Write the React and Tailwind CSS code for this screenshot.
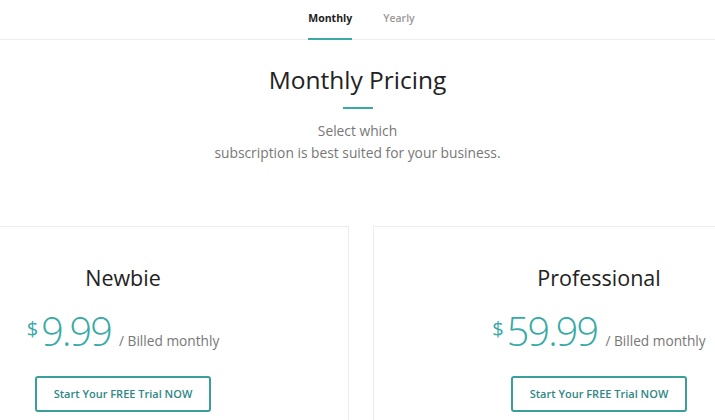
import React from 'react';

const plans = [
  { name: 'Newbie', price: '9.99' },
  { name: 'Professional', price: '59.99' },
];

const PlanCard = ({ plan }) => (
  <div className="w-[452px] shrink-0 h-[240px] border border-[#ececec] bg-white flex flex-col items-center pt-[36px]">
    <h3 className="text-[21.5px] leading-[30px] text-[#222]">{plan.name}</h3>
    <div className="mt-[16px] flex items-baseline text-[#36aaa5]">
      <span className="relative -top-[10px] text-[20px] leading-none mr-[3px]">$</span>
      <span className="text-[39.5px] leading-[44px] font-light tracking-[-1.8px]">{plan.price}</span>
      <span className="text-[13.7px] text-[#777] ml-[8px]">/ Billed monthly</span>
    </div>
    <button className="mt-[23px] w-[176px] h-[36px] border-2 border-[#3a9e9b] rounded-[3px] text-[11px] font-semibold text-[#2e8784]">
      Start Your FREE Trial NOW
    </button>
  </div>
);

export default function App() {
  return (
    <div className="w-[715px] h-[420px] overflow-hidden bg-white font-['Open_Sans',sans-serif]">
      {/* tabs */}
      <div className="border-b border-[#eeeeee] flex justify-center gap-[31px] pl-[8px]">
        <div className="relative pt-[11px] pb-[12px] text-[10.5px] font-bold text-[#222]">
          Monthly
          <div className="absolute left-0 right-0 bottom-[-1px] h-[2px] bg-[#3aa9a4]" />
        </div>
        <div className="pt-[11px] pb-[12px] text-[10.5px] font-semibold text-[#999]">Yearly</div>
      </div>

      {/* heading */}
      <div className="flex flex-col items-center pt-[23px]">
        <h1 className="text-[24.5px] leading-[34px] text-[#222] font-normal">Monthly Pricing</h1>
        <div className="mt-[10px] w-[30px] h-[2px] bg-[#3aa9a4]" />
        <p className="mt-[11px] text-center text-[13.8px] leading-[22px] text-[#777]">
          Select which
          <br />
          subscription is best suited for your business.
        </p>
      </div>

      {/* cards */}
      <div className="mt-[62px] flex justify-center gap-[24px] pl-[7px]">
        {plans.map((p) => (
          <PlanCard key={p.name} plan={p} />
        ))}
      </div>
    </div>
  );
}
